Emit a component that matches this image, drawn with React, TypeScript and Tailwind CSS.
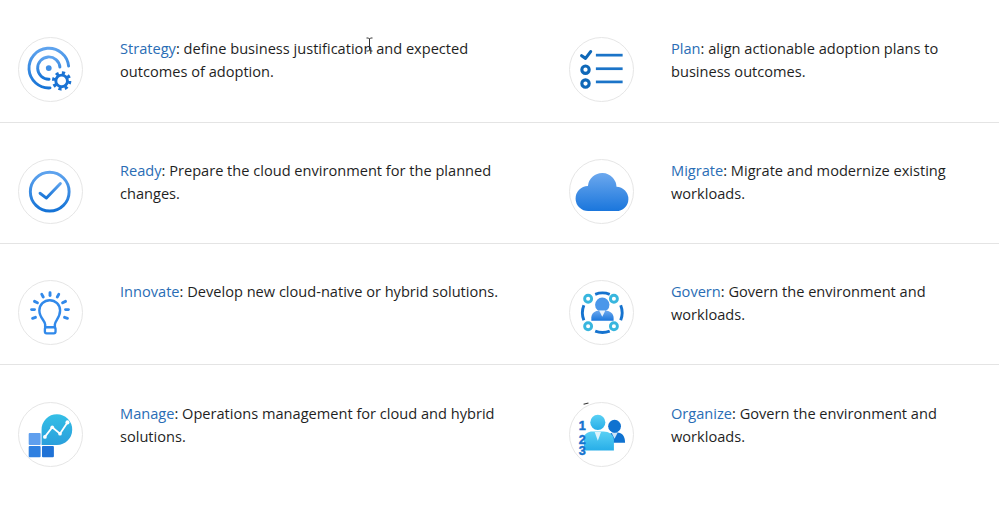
import type { ReactNode } from "react";

const stroke = "url(#blueV)";

function StrategyIcon() {
  return (
    <svg viewBox="0 0 65 65" className="h-full w-full">
      <g fill="none" stroke={stroke} strokeWidth="3" strokeLinecap="round">
        <path d="M32 51.5A20.5 20.5 0 1 1 51.2 29" />
        <path d="M31 42.5A11.5 11.5 0 1 1 42.2 30" />
      </g>
      <circle cx="30.7" cy="31" r="3" fill="#3f8fe6" />
      <circle cx="44" cy="44.3" r="8.4" fill="#fff" />
      <circle cx="44" cy="44.3" r="6" fill="none" stroke="#1a73d4" strokeWidth="3" />
      <circle cx="44" cy="44.3" r="8.3" fill="none" stroke="#1a73d4" strokeWidth="3.4" strokeDasharray="3.2 3.32" />
    </svg>
  );
}

function PlanIcon() {
  return (
    <svg viewBox="0 0 65 65" className="h-full w-full">
      <path d="M12 18.3L16 21L21.3 14" fill="none" stroke="#0f68b8" strokeWidth="3.2" strokeLinecap="round" strokeLinejoin="round" />
      <circle cx="16" cy="32.7" r="3.8" fill="none" stroke="#0f68b8" strokeWidth="3.2" />
      <circle cx="16" cy="47" r="3.8" fill="none" stroke="#0f68b8" strokeWidth="3.2" />
      <g stroke="#1b74c8" strokeWidth="2.8">
        <path d="M26.7 17.7H54.3" />
        <path d="M26.7 31.7H54.3" />
        <path d="M26.7 45.3H54.3" />
      </g>
    </svg>
  );
}

function ReadyIcon() {
  return (
    <svg viewBox="0 0 65 65" className="h-full w-full">
      <circle cx="31.7" cy="32.7" r="20" fill="none" stroke={stroke} strokeWidth="3" />
      <path d="M21.7 34.3L28.3 39.3L42.7 24.3" fill="none" stroke={stroke} strokeWidth="3" strokeLinecap="round" strokeLinejoin="round" />
    </svg>
  );
}

function CloudIcon() {
  return (
    <svg viewBox="0 0 65 65" className="h-full w-full">
      <path
        d="M19 52.7A13 13 0 0 1 18.5 26.7A14.8 14.8 0 0 1 48 27.7A12.5 12.5 0 0 1 47.5 52.7Z"
        fill="url(#cloudV)"
      />
    </svg>
  );
}

function BulbIcon() {
  return (
    <svg viewBox="0 0 65 65" className="h-full w-full">
      <g fill="none" stroke="#3189ea" strokeLinecap="round" strokeLinejoin="round">
        <path strokeWidth="2.5" d="M27 47.5V45C27 41 21 38 21 30.5A10.7 10.7 0 0 1 42.4 30.5C42.4 38 37 41 37 45V47.5" />
        <rect x="26.7" y="47.7" width="11" height="6.3" rx="1.8" strokeWidth="2.4" />
        <g strokeWidth="3">
          <path d="M32 12V15" />
          <path d="M23.5 13.8L25 16.5" />
          <path d="M41 13.8L39.5 16.5" />
          <path d="M16 21L19 22.5" />
          <path d="M48 21L45 22.5" />
          <path d="M13 29.5H16" />
          <path d="M48 29.5H51" />
          <path d="M14 38.5L17 37.5" />
          <path d="M50 38.5L47 37.5" />
        </g>
      </g>
    </svg>
  );
}

function GovernIcon() {
  return (
    <svg viewBox="0 0 65 65" className="h-full w-full">
      <g fill="none" stroke="#1573cf" strokeWidth="3">
        <path d="M26 13.7A21 21 0 0 1 41 13.7" />
        <path d="M26 51.7A21 21 0 0 0 41 51.7" />
        <path d="M14.3 25A21 21 0 0 0 14.3 40.5" />
        <path d="M52.3 25A21 21 0 0 1 52.3 40.5" />
      </g>
      <g fill="#fff" stroke="#38b6de" strokeWidth="3">
        <circle cx="18.7" cy="18.3" r="3.6" />
        <circle cx="45.3" cy="18.3" r="3.6" />
        <circle cx="18.7" cy="46.7" r="3.6" />
        <circle cx="45.3" cy="46.7" r="3.6" />
      </g>
      <circle cx="33.3" cy="24.5" r="7.4" fill="#4b97ea" />
      <path d="M22 41V38C22 33.5 26 30.5 30 30.5H36.5C40.5 30.5 45 33.5 45 38V41Z" fill="url(#cloudV)" />
      <path d="M30 30.5H36.5L33.3 37Z" fill="#e8f1fb" />
    </svg>
  );
}

function ManageIcon() {
  return (
    <svg viewBox="0 0 65 65" className="h-full w-full">
      <rect x="10" y="31" width="12.3" height="12.3" rx="1" fill="#5f9fee" />
      <rect x="10" y="44.3" width="12.3" height="11.7" rx="1" fill="#2f80e0" />
      <rect x="23.7" y="44.3" width="12.3" height="11.7" rx="1" fill="#1f72d6" />
      <path d="M23.3 43.3V27.5A15.8 15.8 0 1 1 39 43.3Z" fill="url(#tealV)" />
      <path d="M26.7 35L34.3 25L42.3 31.7L50 20" fill="none" stroke="#fff" strokeWidth="1.9" />
      <g fill="#fff">
        <circle cx="26.7" cy="35" r="1.9" />
        <circle cx="34.3" cy="25" r="1.9" />
        <circle cx="42.3" cy="31.7" r="1.9" />
        <circle cx="50" cy="20" r="2.1" />
      </g>
    </svg>
  );
}

function OrganizeIcon() {
  return (
    <svg viewBox="0 0 65 65" className="h-full w-full overflow-visible">
      <path d="M14 1.2L19 0" stroke="#333" strokeWidth="1.1" />
      <circle cx="46" cy="24" r="6.6" fill="#0f72d0" />
      <path d="M40 41V34.5C40 32 43 30.5 46 30.5H49C53.5 30.5 56.8 34 56.8 41Z" fill="#0f72d0" />
      <path d="M43 31H49L46 37Z" fill="#cfe4f6" />
      <circle cx="28.7" cy="20" r="7.8" fill="url(#cyanV)" />
      <path d="M14.3 49V37C14.3 32 19 29.5 23 29.5H34.5C40 29.5 45.3 33 45.3 38.5V49Z" fill="url(#cyanV)" />
      <path d="M25.5 30H32L28.7 39Z" fill="#dff4fc" />
      <g fill="#1573cf" stroke="#1573cf" strokeWidth="0.5" fontFamily="'Liberation Sans', sans-serif" fontSize="13" fontWeight="700" textAnchor="middle">
        <text x="12.7" y="28">1</text>
        <text x="12.7" y="42">2</text>
        <text x="12.7" y="54">3</text>
      </g>
    </svg>
  );
}

function Gradients() {
  return (
    <svg className="absolute h-0 w-0">
      <defs>
        <linearGradient id="blueV" x1="0" y1="0" x2="0" y2="1">
          <stop offset="0" stopColor="#5ea3ee" />
          <stop offset="1" stopColor="#1573d6" />
        </linearGradient>
        <linearGradient id="cloudV" x1="0" y1="0" x2="0" y2="1">
          <stop offset="0" stopColor="#6ca8ee" />
          <stop offset="1" stopColor="#1a76dc" />
        </linearGradient>
        <linearGradient id="tealV" x1="0" y1="0" x2="0" y2="1">
          <stop offset="0" stopColor="#34bfe6" />
          <stop offset="1" stopColor="#2a9fdc" />
        </linearGradient>
        <linearGradient id="cyanV" x1="0" y1="0" x2="0" y2="1">
          <stop offset="0" stopColor="#5ad0f4" />
          <stop offset="1" stopColor="#27aee8" />
        </linearGradient>
      </defs>
    </svg>
  );
}

function Item({ icon, title, text, right }: { icon: ReactNode; title: string; text: string; right?: boolean }) {
  return (
    <div className={right ? "flex gap-[37px] pl-[17px]" : "flex gap-[37px] pl-[18px]"}>
      <div className="h-[65px] w-[65px] shrink-0 rounded-full border border-[#e6e6e6] bg-white">{icon}</div>
      <p className={right ? "w-[310px] text-[14.6px] leading-[23px] text-[#1f1f1f]" : "w-[395px] text-[14.6px] leading-[23px] text-[#1f1f1f]"}>
        <a className="text-[#2a6db5]">{title}</a>: {text}
      </p>
    </div>
  );
}

const rows = [
  {
    className: "grid h-[123px] grid-cols-[552px_1fr] border-b border-[#e4e4e4] pt-[37px]",
    left: { icon: <StrategyIcon />, title: "Strategy", text: "define business justification and expected outcomes of adoption." },
    right: { icon: <PlanIcon />, title: "Plan", text: "align actionable adoption plans to business outcomes." },
  },
  {
    className: "grid h-[121px] grid-cols-[552px_1fr] border-b border-[#e4e4e4] pt-[36px]",
    left: { icon: <ReadyIcon />, title: "Ready", text: "Prepare the cloud environment for the planned changes." },
    right: { icon: <CloudIcon />, title: "Migrate", text: "Migrate and modernize existing workloads." },
  },
  {
    className: "grid h-[121px] grid-cols-[552px_1fr] border-b border-[#e4e4e4] pt-[36px]",
    left: { icon: <BulbIcon />, title: "Innovate", text: "Develop new cloud-native or hybrid solutions." },
    right: { icon: <GovernIcon />, title: "Govern", text: "Govern the environment and workloads." },
  },
  {
    className: "grid grid-cols-[552px_1fr] pt-[37px]",
    left: { icon: <ManageIcon />, title: "Manage", text: "Operations management for cloud and hybrid solutions." },
    right: { icon: <OrganizeIcon />, title: "Organize", text: "Govern the environment and workloads." },
  },
];

export default function App() {
  return (
    <div className="relative h-[511px] w-[999px] overflow-hidden bg-white font-['Open_Sans',sans-serif]">
      <Gradients />
      {rows.map((row) => (
        <div key={row.left.title} className={row.className}>
          <Item {...row.left} />
          <Item {...row.right} right />
        </div>
      ))}
      {/* text cursor left over in the screenshot */}
      <svg viewBox="0 0 9 15" className="absolute left-[365px] top-[37px] h-[15px] w-[9px]">
        <path d="M1.5 1H3.5L4.5 2L5.5 1H7.5M4.5 2V13M1.5 14H3.5L4.5 13L5.5 14H7.5" fill="none" stroke="#333" strokeWidth="1" />
      </svg>
    </div>
  );
}
